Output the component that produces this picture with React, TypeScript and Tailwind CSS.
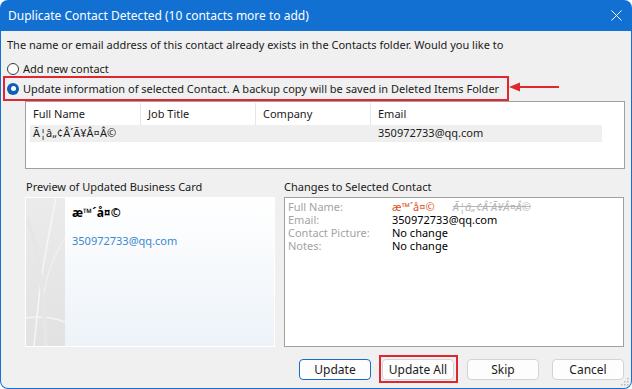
import React from 'react';

const Radio: React.FC<{ checked?: boolean }> = ({ checked }) =>
  checked ? (
    <span className="w-[12px] h-[12px] rounded-full bg-[#0b5fb5] flex items-center justify-center shrink-0">
      <span className="w-[5px] h-[5px] rounded-full bg-white" />
    </span>
  ) : (
    <span className="w-[12px] h-[12px] rounded-full border border-[#3a3a3a] bg-white shrink-0" />
  );

const Button: React.FC<{ label: string; primary?: boolean; className?: string }> = ({ label, primary, className = '' }) => (
  <button
    className={`w-[72px] h-[21px] rounded-[4px] bg-[#fdfdfd] text-[12px] text-[#1b1b1b] leading-none flex items-center justify-center ${
      primary ? 'border border-[#1a6cc2]' : 'border border-[#d3d3d3]'
    } ${className}`}
  >
    {label}
  </button>
);

const changes = [
  { label: 'Full Name:', value: null },
  { label: 'Email:', value: '350972733@qq.com' },
  { label: 'Contact Picture:', value: 'No change' },
  { label: 'Notes:', value: 'No change' },
];

export default function App() {
  return (
    <div className="w-[632px] h-[389px] bg-[#1170d2] rounded-[8px] overflow-hidden flex flex-col px-[1px] pb-[1px] font-['Noto_Sans',sans-serif] text-[11px] text-[#1b1b1b]">
      <div className="h-[31px] shrink-0 flex items-center justify-between pl-[7px] pr-[9px] text-white text-[12px]">
        <span>Duplicate Contact Detected (10 contacts more to add)</span>
        <svg width="11" height="11" viewBox="0 0 11 11">
          <path d="M0.5 0.5 L10.5 10.5 M10.5 0.5 L0.5 10.5" stroke="white" strokeWidth="1" />
        </svg>
      </div>

      <div className="flex-1 bg-[#f0f0f0] rounded-b-[7px] relative flex flex-col">
        <p className="mt-[7px] ml-[6px] h-[14px] leading-[14px]">
          The name or email address of this contact already exists in the Contacts folder. Would you like to
        </p>

        <div className="mt-[10px] ml-[6px] h-[14px] flex items-center gap-[4px]">
          <Radio />
          <span className="leading-[14px]">Add new contact</span>
        </div>

        <div className="ml-[2px] w-[506px] h-[25px] border-2 border-[#e0262e] flex items-center pl-[2px] gap-[4px]">
          <Radio checked />
          <span className="leading-[14px]">
            Update information of selected Contact. A backup copy will be saved in Deleted Items Folder
          </span>
        </div>

        <svg className="absolute left-[507px] top-[50px]" width="52" height="12" viewBox="0 0 52 12">
          <path d="M1 6 L12 1.5 L12 10.5 Z" fill="#e0262e" />
          <rect x="11" y="5" width="40" height="2" fill="#e0262e" />
        </svg>

        <div className="ml-[24px] w-[600px] h-[68px] border border-[#a0a0a0] bg-white pt-[1px] pl-[4px]">
          <div className="flex h-[22px] w-[572px]">
            <div className="w-[111px] pl-[3px] border-r border-[#e6e6e6] flex items-center">Full Name</div>
            <div className="w-[115px] pl-[7px] border-r border-[#e6e6e6] flex items-center">Job Title</div>
            <div className="w-[115px] pl-[7px] border-r border-[#e6e6e6] flex items-center">Company</div>
            <div className="flex-1 pl-[7px] flex items-center">Email</div>
          </div>
          <div className="flex h-[17px] w-[572px] bg-[#efefef] items-center">
            <div className="w-[111px] pl-[3px]">Ã¦â„¢Â´Ã¥Â¤Â©</div>
            <div className="w-[115px]" />
            <div className="w-[115px]" />
            <div className="flex-1 pl-[7px]">350972733@qq.com</div>
          </div>
        </div>

        <div className="flex">
          <div className="ml-[24px] w-[250px] flex flex-col">
            <div className="mt-[11px] h-[14px] leading-[14px] pl-[1px]">Preview of Updated Business Card</div>
            <div className="mt-[3px] h-[150px] border border-white flex bg-gradient-to-b from-white to-[#edf3f9]">
              <div className="w-[39px] h-full bg-gradient-to-b from-[#ebebeb] to-[#e2e2e2] relative overflow-hidden">
                <svg className="absolute inset-0" width="39" height="148" viewBox="0 0 39 148">
                  <path d="M30 0 C24 30 18 60 14 90 C12 110 10 130 8 148" stroke="#f6f6f6" strokeWidth="1.5" fill="none" />
                  <path d="M39 40 C30 55 22 70 18 95" stroke="#f3f3f3" strokeWidth="1" fill="none" />
                  <path d="M0 120 C12 118 26 119 39 124" stroke="#f4f4f4" strokeWidth="1.5" fill="none" />
                  <path d="M0 20 C10 40 16 70 20 148" stroke="#e6e6e6" strokeWidth="4" fill="none" />
                </svg>
              </div>
              <div className="flex-1 pl-[7px] pt-[8px] flex flex-col">
                <div className="h-[14px] leading-[14px] font-bold text-[12px] text-black">æ™´å¤©</div>
                <div className="mt-[14px] h-[14px] leading-[14px] text-[#3b88cf]">350972733@qq.com</div>
              </div>
            </div>
          </div>

          <div className="ml-[9px] w-[340px] flex flex-col">
            <div className="mt-[11px] h-[14px] leading-[14px]">Changes to Selected Contact</div>
            <div className="mt-[3px] h-[150px] border border-[#a0a0a0] bg-white pl-[3px] pt-[2px]">
              {changes.map((c) => (
                <div key={c.label} className="flex h-[13px] leading-[13px]">
                  <span className="w-[104px] text-[#a3a3a3]">{c.label}</span>
                  {c.value ? (
                    <span className="text-black">{c.value}</span>
                  ) : (
                    <span className="flex">
                      <span className="text-[#e0501c]">æ™´å¤©</span>
                      <span className="ml-[18px] italic line-through text-[#b5b5b5]">Ã¦â„¢Â´Ã¥Â¤Â©</span>
                    </span>
                  )}
                </div>
              ))}
            </div>
          </div>
        </div>

        <div className="mt-[12px] h-[21px] flex justify-end pr-[7px]">
          <Button label="Update" primary />
          <span className="relative ml-[11px]">
            <Button label="Update All" />
            <span className="absolute left-[-3px] right-[-4px] top-[-4px] bottom-[-3px] border-2 border-[#e0262e]" />
          </span>
          <Button label="Skip" className="ml-[13px]" />
          <Button label="Cancel" className="ml-[13px]" />
        </div>

        <svg className="absolute right-[2px] bottom-[2px]" width="8" height="8" viewBox="0 0 8 8">
          <rect x="6" y="0" width="1.5" height="1.5" fill="#b8b8b8" />
          <rect x="3" y="3" width="1.5" height="1.5" fill="#b8b8b8" />
          <rect x="6" y="3" width="1.5" height="1.5" fill="#b8b8b8" />
          <rect x="0" y="6" width="1.5" height="1.5" fill="#b8b8b8" />
          <rect x="3" y="6" width="1.5" height="1.5" fill="#b8b8b8" />
          <rect x="6" y="6" width="1.5" height="1.5" fill="#b8b8b8" />
        </svg>
      </div>
    </div>
  );
}
